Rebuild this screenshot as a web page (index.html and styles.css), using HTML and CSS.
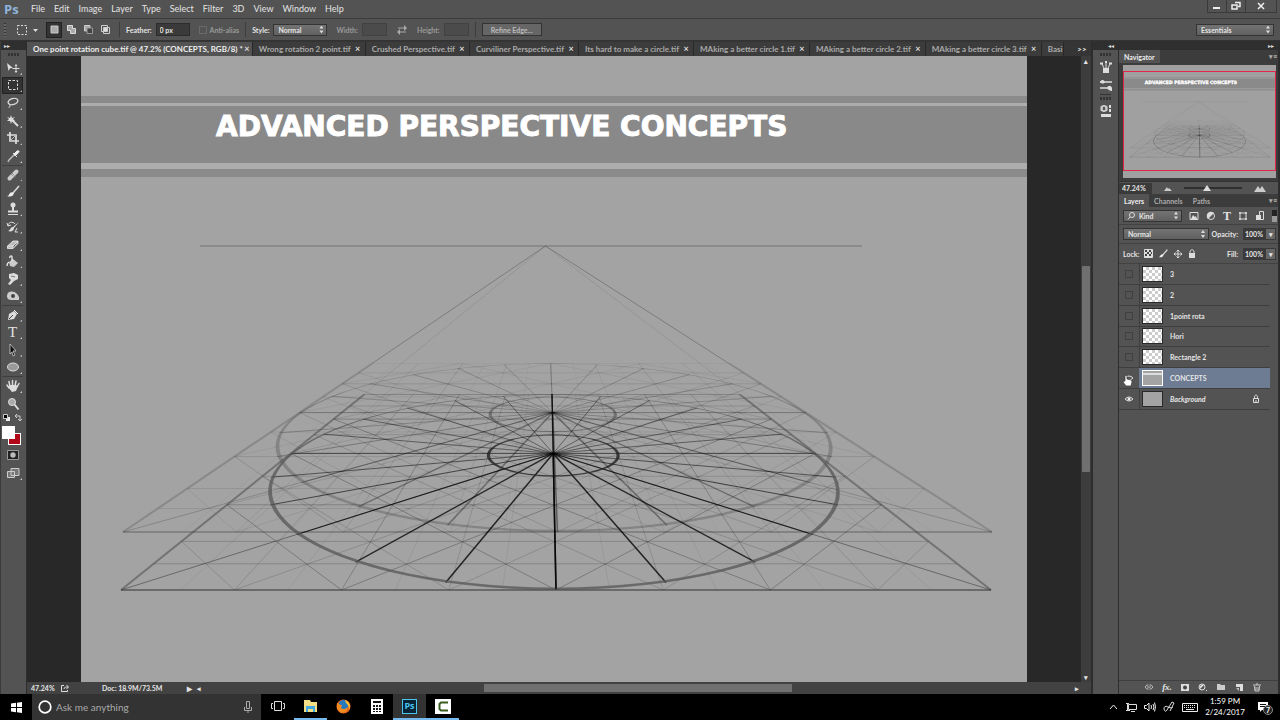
FILE: index.html
```html
<!DOCTYPE html>
<html lang="en">
<head>
<meta charset="utf-8">
<meta name="viewport" content="width=device-width, initial-scale=1">
<title>One point rotation cube.tif</title>
<link rel="stylesheet" href="styles.css">
</head>
<body>
<header class="menubar">
  <span class="logo">Ps</span>
  <nav class="menus">
    <button>File</button><button>Edit</button><button>Image</button><button>Layer</button><button>Type</button><button>Select</button><button>Filter</button><button>3D</button><button>View</button><button>Window</button><button>Help</button>
  </nav>
  <div class="window-buttons">
    <button aria-label="Minimize"><svg width="10" height="10" viewBox="0 0 10 10"><path d="M1 7h7" stroke="#eee" stroke-width="2"/></svg></button>
    <button aria-label="Restore"><svg width="10" height="10" viewBox="0 0 10 10"><path d="M4 1.500h5v4H7M1 4h5v4H1z" fill="none" stroke="#eee" stroke-width="1.500"/></svg></button>
    <button class="close" aria-label="Close"><svg width="10" height="10" viewBox="0 0 10 10"><path d="M2 2l6 6M8 2L2 8" stroke="#eee" stroke-width="1.500"/></svg></button>
  </div>
</header>

<section class="options">
  <span class="grip"></span>
  <button class="preset" aria-label="Marquee presets"><svg width="22" height="12" viewBox="0 0 22 12"><rect x="1.500" y="1.500" width="9" height="9" fill="none" stroke="#ddd" stroke-dasharray="2 1.500"/><path d="M17 5h5l-2.500 3z" fill="#ddd"/></svg></button>
  <div class="modes">
    <button class="on" aria-label="New selection"><svg width="11" height="11" viewBox="0 0 11 11"><path d="M2 2h7v7H2z" fill="#aaa" stroke="#ccc"/></svg></button>
    <button aria-label="Add to selection"><svg width="11" height="11" viewBox="0 0 11 11"><path d="M1.500 1.500h5v3h3v5h-5v-3h-3z" fill="#aaa" stroke="#ddd"/></svg></button>
    <button aria-label="Subtract from selection"><svg width="11" height="11" viewBox="0 0 11 11"><path d="M1.500 7V1.500H7V4H4v3z" fill="#aaa" stroke="#ccc"/><path d="M4 4h5.500v5.500H4z" fill="#444" stroke="#999"/></svg></button>
    <button aria-label="Intersect with selection"><svg width="11" height="11" viewBox="0 0 11 11"><path d="M1.500 1.500h6v6h-6zM3.500 3.500h6v6h-6z" fill="none" stroke="#ccc"/><path d="M4 4h3v3H4z" fill="#ddd"/></svg></button>
  </div>
  <span class="divider"></span>
  <label class="field">Feather: <input class="w-m" type="text" value="0 px"></label>
  <label class="field dim check"><input type="checkbox" disabled> Anti-alias</label>
  <span class="divider"></span>
  <label class="field">Style: <span class="select w-l"><select><option>Normal</option></select></span></label>
  <label class="field dim">Width: <input class="w-s" type="text" disabled></label>
  <button class="swap" aria-label="Swap height and width"><svg width="12" height="10" viewBox="0 0 12 10"><path d="M2 3h7M3 7h7" stroke="#aaa"/><path d="M8 0l3 3-3 3zM4 4L1 7l3 3z" fill="#aaa"/></svg></button>
  <label class="field dim">Height: <input class="w-s" type="text" disabled></label>
  <span class="divider"></span>
  <button class="refine">Refine Edge...</button>
  <span class="select essentials"><select aria-label="Workspace"><option>Essentials</option></select></span>
</section>

<main class="workspace">
  <aside class="toolbox">
    <div class="dock-head">▸▸</div>
    <div class="dots"></div>
    <div class="tools t6">
      <button aria-label="Move"><svg viewBox="0 0 16 14"><path d="M2 2l6 5-3 .3L3.500 10z" fill="#ddd"/><path d="M11 4v7M7.500 7.500h7M10 5l1-1.500L12 5M10 10l1 1.500L12 10" stroke="#ddd" fill="none"/></svg></button>
      <button class="on" aria-label="Rectangular marquee"><svg viewBox="0 0 16 14"><rect x="3.500" y="2.500" width="9" height="9" fill="none" stroke="#ddd" stroke-dasharray="2.500 1.500"/></svg></button>
      <button aria-label="Lasso"><svg viewBox="0 0 16 14"><ellipse cx="8" cy="5.500" rx="5" ry="3" transform="rotate(-15 8 5.500)" fill="none" stroke="#ddd" stroke-width="1.300"/><path d="M4 7c-1 2 2 1 1 3s-1 1-1 2" fill="none" stroke="#ddd"/></svg></button>
      <button aria-label="Magic wand"><svg viewBox="0 0 16 14"><path d="M7 6l6 6" stroke="#ddd" stroke-width="2"/><path d="M6 1l1 3 3-1-2 2 2 2-3 0-1 3-1-3-3 0 2-2-2-2 3 1z" fill="#ddd"/></svg></button>
      <button aria-label="Crop"><svg viewBox="0 0 16 14"><path d="M5 1v9h9M2 4h9v9" fill="none" stroke="#ddd" stroke-width="1.700"/><path d="M5 10l6-6" stroke="#bbb"/></svg></button>
      <button aria-label="Eyedropper"><svg viewBox="0 0 16 14"><path d="M9 5l3-3c2-1 3 1 1 2l-3 3zM8 4l4 4" fill="#eee" stroke="#eee"/><path d="M9 6l-5 5-1 2" fill="none" stroke="#bbb" stroke-width="1.500"/></svg></button>
    </div>
    <div class="tools t8">
      <button aria-label="Healing brush"><svg viewBox="0 0 16 14"><path d="M4.500 10.500l7-7" stroke="#ccc" stroke-width="4" stroke-linecap="round"/><path d="M6 6l4 4M7 5l4 4" stroke="#777" stroke-dasharray="1 1"/></svg></button>
      <button aria-label="Brush"><svg viewBox="0 0 16 14"><path d="M14 1L8 8" stroke="#ddd" stroke-width="1.500"/><path d="M9 8c-1 4-4 4-7 3 2 0 2-2 3-3s3-1 4 0z" fill="#eee"/></svg></button>
      <button aria-label="Clone stamp"><svg viewBox="0 0 16 14"><circle cx="8" cy="3" r="2.500" fill="#ddd"/><path d="M7 4h2v5H7z" fill="#ddd"/><path d="M3 8.500h10v2H3zM3 12h10v1H3z" fill="#ddd"/></svg></button>
      <button aria-label="History brush"><svg viewBox="0 0 16 14"><path d="M14 2l-5 6c0 3-3 4-6 3 3-1 2-4 5-4z" fill="#ddd"/><path d="M3 6c0-4 5-5 7-2M2 3l1 3 3-1M12 8l-2 4h3" fill="none" stroke="#ddd"/></svg></button>
      <button aria-label="Eraser"><svg viewBox="0 0 16 14"><path d="M2.500 9l5.500-5h5l-5 5zM2.500 9v2.500H8V9M8 11.500l5-5V4" fill="#bbb" stroke="#eee" stroke-width=".8"/></svg></button>
      <button aria-label="Paint bucket"><svg viewBox="0 0 16 14"><path d="M4 7l4-3 5 4-4 4-4-1z" fill="#ccc"/><path d="M7 6V2c0-2-3-1-2 1M4 7c-2 1-2 3-2 4" stroke="#eee" fill="none" stroke-width="1.300"/></svg></button>
      <button aria-label="Smudge"><svg viewBox="0 0 16 14"><path d="M4 2l5-1 4 2v4l-4 2-4 4-2-1 3-4-2-2z" fill="#ddd"/><path d="M6 4l4 1" stroke="#777"/></svg></button>
      <button aria-label="Sponge"><svg viewBox="0 0 16 14"><path d="M2 7c0-6 9-6 12 1v3H7c-3 0-5-1-5-4z" fill="#ccc"/><circle cx="8" cy="7" r="2" fill="#444"/></svg></button>
    </div>
    <div class="tools t4">
      <button aria-label="Pen"><svg viewBox="0 0 16 14"><path d="M3 12l1-6 5-3 3 3-3 5z" fill="#ddd"/><path d="M9 2l4 4" stroke="#eee"/><path d="M4 11l4-4" stroke="#444"/></svg></button>
      <button class="type" aria-label="Type">T</button>
      <button aria-label="Path selection"><svg viewBox="0 0 16 14"><path d="M5 1l6 7H8l2 4-2 1-1-4-2 2z" fill="#111" stroke="#ccc" stroke-width=".8"/></svg></button>
      <button aria-label="Ellipse"><svg viewBox="0 0 16 14"><ellipse cx="8" cy="7" rx="5.500" ry="4" fill="#999" stroke="#ddd"/></svg></button>
    </div>
    <div class="tools t2">
      <button aria-label="Hand"><svg viewBox="0 0 16 14"><path d="M4 9L2 6M5 8L4 2.500M7.500 7V1.500M10 7l1-5M12 8l2-3.500" stroke="#ddd" stroke-width="1.500" stroke-linecap="round"/><path d="M3 8l2-2h6l2 1-2 5-4 1z" fill="#ddd"/></svg></button>
      <button class="plain" aria-label="Zoom"><svg viewBox="0 0 16 14"><circle cx="7" cy="5" r="3.500" fill="#aaa" stroke="#ddd"/><path d="M9.500 7.500l4 5" stroke="#ddd" stroke-width="2"/></svg></button>
    </div>
    <div class="swatch-tools"><svg width="7" height="7" viewBox="0 0 7 7"><path d="M3 3h4v4H3z" fill="#eee"/><path d="M.5.5h4v4h-4z" stroke="#ccc"/></svg><svg width="8" height="7" viewBox="0 0 8 7"><path d="M1 2h5v5M3 0L1 2l2 2M4 5l2 2 2-2" fill="none" stroke="#ccc"/></svg></div>
    <div class="swatches"><button class="fg" aria-label="Foreground color"></button><button class="bg" aria-label="Background color"></button></div>
    <div class="tools t2">
      <button class="plain" aria-label="Quick mask"><svg viewBox="0 0 16 14"><path d="M2.500 2.500h11v9h-11z" fill="#222" stroke="#999"/><circle cx="8" cy="7" r="2.700" fill="#bbb"/></svg></button>
      <button aria-label="Screen mode"><svg viewBox="0 0 16 14"><path d="M6 2.500h8v7H6zM2.500 5.500h7v6h-7z" fill="#777" stroke="#ccc"/></svg></button>
    </div>
  </aside>

  <section class="editor">
    <div class="tabs">
      <div class="tab active"><button>One point rotation cube.tif @ 47.2% (CONCEPTS, RGB/8) *</button><button class="x" aria-label="Close tab">×</button></div>
      <div class="tab"><button>Wrong rotation 2 point.tif</button><button class="x" aria-label="Close tab">×</button></div>
      <div class="tab"><button>Crushed Perspective.tif</button><button class="x" aria-label="Close tab">×</button></div>
      <div class="tab"><button>Curviliner Perspective.tif</button><button class="x" aria-label="Close tab">×</button></div>
      <div class="tab"><button>Its hard to make a circle.tif</button><button class="x" aria-label="Close tab">×</button></div>
      <div class="tab"><button>MAking a better circle 1.tif</button><button class="x" aria-label="Close tab">×</button></div>
      <div class="tab"><button>MAking a better circle 2.tif</button><button class="x" aria-label="Close tab">×</button></div>
      <div class="tab"><button>MAking a better circle 3.tif</button><button class="x" aria-label="Close tab">×</button></div>
      <div class="tab cut"><button>Basi</button></div>
      <button class="more" aria-label="More tabs">&gt;&gt;</button>
    </div>
    <div class="stage">
      <div class="canvas">
        <article class="document">
          <div class="band"><h1>ADVANCED PERSPECTIVE CONCEPTS</h1></div>
          <svg class="drawing" viewBox="81 179 946 503" role="img" aria-label="Perspective construction">
            <g id="construction"></g>
          </svg>
        </article>
      </div>
      <div class="vscroll"><span>▴</span><i></i><span>▾</span></div>
    </div>
    <footer class="status">
      <span class="zoom">47.24%</span>
      <svg width="10" height="9" viewBox="0 0 10 9"><path d="M4 1.500H1.500v6h6V6M4 5c0-2 2-2 4-2M6.500 1l2 2-2 2" fill="none" stroke="#ddd"/></svg>
      <span class="docsize">Doc: 18.9M/73.5M</span>
      <span class="play">▸</span>
      <div class="hscroll"><span>◂</span><i></i><span>▸</span></div>
    </footer>
  </section>

  <aside class="icon-dock">
    <div class="dock-head right">◂◂</div>
    <div class="dots"></div>
    <button aria-label="Brush presets"><svg width="14" height="14" viewBox="0 0 14 14"><path d="M4 8h6v5H4z" fill="#ddd"/><path d="M5 8L3 4M7 8V3M9 8l2-4" stroke="#ddd"/><path d="M1 3.500h3M6 2h2M10 3.500h3" stroke="#ddd" stroke-width="2"/></svg></button>
    <button aria-label="Brushes"><svg width="14" height="14" viewBox="0 0 14 14"><path d="M1 4h12M1 10h8" stroke="#ddd" stroke-width="1.500"/><path d="M1 4c2-3 4-2 5 0-1 2-3 2-5 0zM8 10c1-3 4-3 5 0v3c-2 0-4-1-5-3z" fill="#ddd"/></svg></button>
    <div class="dots split"></div>
    <button aria-label="Properties"><svg width="14" height="14" viewBox="0 0 14 14"><path d="M2 2.500l3-1 3 1v4l-3 1-3-1z" fill="#bbb" stroke="#ddd"/><path d="M4 3h2v3H4z" fill="#555"/><path d="M10 1h2v3h-2zM10 5h2v3h-2zM2 10h10v3H2z" fill="#ddd"/></svg></button>
  </aside>

  <aside class="panels">
    <div class="dock-head right">▸▸</div>
    <div class="panel-tabs"><button class="active">Navigator</button><span class="panel-menu">▾≡</span></div>
    <div class="navigator">
      <svg class="preview" viewBox="81 19 946 700" preserveAspectRatio="none">
        <path d="M81 96h946v7H81zM81 106h946v57H81zM81 169h946v8H81z" fill="#8a8a8a"/>
        <text x="216" y="136">ADVANCED PERSPECTIVE CONCEPTS</text>
        <use href="#construction" opacity=".75"/>
      </svg>
      <span class="frame"></span>
    </div>
    <div class="nav-zoom">
      <input type="text" value="47.24%" aria-label="Zoom level">
      <svg width="8" height="6" viewBox="0 0 8 6"><path d="M0 6l3-4 1 2 1-1 3 3z" fill="#ccc"/></svg>
      <input type="range" min="0" max="100" value="38" aria-label="Zoom">
      <svg width="12" height="7" viewBox="0 0 12 7"><path d="M0 7l4-6 2 3 2-3 4 6z" fill="#ccc"/></svg>
    </div>
    <div class="panel-tabs"><button class="active">Layers</button><button>Channels</button><button>Paths</button><span class="panel-menu">▾≡</span></div>
    <div class="filter row">
      <span class="select kind"><svg width="8" height="8" viewBox="0 0 8 8"><circle cx="5" cy="3" r="2.500" fill="none" stroke="#ddd"/><path d="M3 5L1 7.500" stroke="#ddd"/></svg><select aria-label="Filter type"><option>Kind</option></select></span>
      <svg width="10" height="10" viewBox="0 0 10 10"><path d="M1 1.500h8v7H1z" fill="none" stroke="#ddd"/><path d="M2 8l2-4 2 2 1-1 1 3z" fill="#ddd"/></svg>
      <svg width="10" height="10" viewBox="0 0 10 10"><circle cx="5" cy="5" r="3.500" fill="#555" stroke="#ddd"/><path d="M2 8A4 4 0 0 1 8 2z" fill="#ddd"/></svg>
      <b class="serif">T</b>
      <svg width="10" height="10" viewBox="0 0 10 10"><path d="M2 2h6v6H2z" fill="none" stroke="#ddd"/><path d="M1 1h2v2H1zM7 1h2v2H7zM1 7h2v2H1zM7 7h2v2H7z" fill="#ccc"/></svg>
      <svg width="10" height="10" viewBox="0 0 10 10"><path d="M4.500.500h4v8h-4z" fill="#555" stroke="#ddd"/><path d="M1 4h5v5H1z" fill="#ddd"/></svg>
      <span class="switch"></span>
    </div>
    <div class="row mode">
      <span class="select blend"><select aria-label="Blend mode"><option>Normal</option></select></span>
      <label class="amount">Opacity: <input type="text" value="100%"></label><button class="drop">▾</button>
    </div>
    <div class="row lock">
      <span>Lock:</span>
      <svg width="9" height="9" viewBox="0 0 9 9"><path d="M.5.500h8v8h-8z" fill="#ddd" stroke="#ddd"/><path d="M1 1h2v2H1zM5 1h2v2H5zM3 3h2v2H3zM7 3h1v2H7zM1 5h2v2H1zM5 5h2v2H5z" fill="#444"/></svg>
      <svg width="10" height="10" viewBox="0 0 16 14"><path d="M15 0L8 8" stroke="#ddd" stroke-width="2"/><path d="M9 8c-1 4-4 5-8 4 2 0 2-3 4-4s3-1 4 0z" fill="#eee"/></svg>
      <svg width="10" height="10" viewBox="0 0 10 10"><path d="M5 1v8M1 5h8M3.500 2.500L5 1l1.500 1.500M3.500 7.500L5 9l1.500-1.500M2.500 3.500L1 5l1.500 1.500M7.500 3.500L9 5 7.500 6.500" fill="none" stroke="#ddd"/></svg>
      <svg width="8" height="10" viewBox="0 0 8 10"><path d="M1 4h6v5H1z" fill="#ddd"/><path d="M2 5V3c0-3 4-3 4 0v2" fill="none" stroke="#ddd"/></svg>
      <label class="amount">Fill: <input type="text" value="100%"></label><button class="drop">▾</button>
    </div>
    <ul class="layers">
      <li><button class="vis" aria-label="Show layer"></button><span class="thumb clear"></span><span>3</span></li>
      <li><button class="vis" aria-label="Show layer"></button><span class="thumb clear"></span><span>2</span></li>
      <li><button class="vis" aria-label="Show layer"></button><span class="thumb clear"></span><span>1point rota</span></li>
      <li><button class="vis" aria-label="Show layer"></button><span class="thumb clear"></span><span>Hori</span></li>
      <li><button class="vis" aria-label="Show layer"></button><span class="thumb clear"></span><span>Rectangle 2</span></li>
      <li class="selected"><button class="vis eye" aria-label="Hide layer"><svg width="10" height="8" viewBox="0 0 10 8"><path d="M1 4q4-4 8 0-4 4-8 0z" fill="#555" stroke="#ddd"/></svg></button><span class="thumb shot"></span><span>CONCEPTS</span>
        <svg class="cursor" width="11" height="13" viewBox="0 0 11 13"><path d="M3 7V2q1-2 2 0v3l4 1q1 0 1 2l-1 4H4L1 8q0-1 2-1z" fill="#fff" stroke="#333" stroke-width=".7"/></svg></li>
      <li><button class="vis eye" aria-label="Hide layer"><svg width="10" height="8" viewBox="0 0 10 8"><path d="M1 4q4-4 8 0-4 4-8 0z" fill="#555" stroke="#ddd"/><circle cx="5" cy="4" r="1.500" fill="#eee"/></svg></button><span class="thumb"></span><em>Background</em>
        <svg class="locked" width="8" height="10" viewBox="0 0 8 10"><path d="M1.500 4.500h5v4h-5zM2.500 4V3c0-2.500 3-2.500 3 0v1M4 6v2" fill="none" stroke="#ddd"/></svg></li>
    </ul>
    <div class="layer-actions">
      <button aria-label="Link layers"><svg width="10" height="8" viewBox="0 0 10 8"><path d="M4.500 2H3Q-.5 4 3 6h1.500M5.500 2H7q3.500 2 0 4H5.500M3 4h4" fill="none" stroke="#bbb"/></svg></button>
      <button class="fx">fx.</button>
      <button aria-label="Add mask"><svg width="10" height="8" viewBox="0 0 10 8"><path d="M1 1h8v7H1z" fill="#ddd"/><circle cx="5" cy="4.500" r="2" fill="#444"/></svg></button>
      <button aria-label="Adjustment layer"><svg width="10" height="8" viewBox="0 0 10 8"><circle cx="4" cy="4" r="3" fill="#555" stroke="#ddd"/><path d="M2 6A3 3 0 0 1 6 2zM8 7h1v1H8z" fill="#ddd"/></svg></button>
      <button aria-label="New group"><svg width="10" height="8" viewBox="0 0 10 8"><path d="M1 1h3l1 1h4v5H1z" fill="#ccc"/></svg></button>
      <button aria-label="New layer"><svg width="10" height="8" viewBox="0 0 10 8"><path d="M2 1h7v7H6V4H2z" fill="#ddd"/><path d="M2 5l3 3V5z" fill="#bbb"/></svg></button>
      <button aria-label="Delete layer"><svg width="10" height="9" viewBox="0 0 10 9"><path d="M1 2h8M4 1h2M2.500 3l.5 5h4l.5-5M4 4v3M6 4v3" fill="none" stroke="#ccc"/></svg></button>
    </div>
  </aside>
</main>

<footer class="taskbar">
  <button class="start" aria-label="Start"><svg width="11" height="11" viewBox="0 0 11 11"><path d="M0 1.500l5-.7V5H0zM6 .7L11 0v5H6zM0 6h5v4.200l-5-.7zM6 6h5v5l-5-.7z" fill="#fff"/></svg></button>
  <div class="search">
    <svg width="14" height="14" viewBox="0 0 14 14"><circle cx="7" cy="7" r="5.800" fill="none" stroke="#fff" stroke-width="1.700"/></svg>
    <input type="text" placeholder="Ask me anything" aria-label="Search">
    <svg width="8" height="12" viewBox="0 0 8 12"><path d="M2.500.5h3v7h-3zM.5 6v3.500h7V6M4 9.500V12" fill="none" stroke="#aaa"/></svg>
  </div>
  <div class="apps">
    <button aria-label="Task view"><svg width="14" height="12" viewBox="0 0 14 12"><path d="M3.500 1.500h7v9h-7zM2 3.500H.5v5H2M12 3.500h1.500v5H12" fill="none" stroke="#ddd"/></svg></button>
    <button class="running" aria-label="File Explorer"><svg width="15" height="14" viewBox="0 0 15 14"><path d="M1 1h6l1 2h6v10H1z" fill="#f5df84"/><path d="M3 7h9v6h-2v-3H5v3H3z" fill="#42a9df"/></svg></button>
    <button aria-label="Firefox"><svg width="15" height="15" viewBox="0 0 15 15"><circle cx="7.500" cy="7.500" r="7" fill="#e8651b"/><circle cx="7.500" cy="6" r="5" fill="#2679bd"/><path d="M1 4c2 0 2 2 5 2l-1 3c2 2 5 1 7-1l-2 5-5 1-4-4z" fill="#f18b20"/><path d="M9 1c5 2 6 6 4 10 0-4-1-5-3-7z" fill="#f9bd35"/></svg></button>
    <button aria-label="Calculator"><svg width="12" height="15" viewBox="0 0 12 15"><path d="M0 0h12v15H0z" fill="#fff"/><path d="M2 2h8v2H2zM2 6h2v2H2zM5 6h2v2H5zM8 6h2v2H8zM2 9h2v2H2zM5 9h2v2H5zM8 9h2v2H8zM2 12h2v1H2zM5 12h2v1H5zM8 12h2v1H8z" fill="#111"/></svg></button>
    <button class="running current" aria-label="Photoshop"><span class="ps">Ps</span></button>
    <button class="running" aria-label="Camtasia"><svg width="16" height="15" viewBox="0 0 16 15"><path d="M0 0h16v15H0z" fill="#fff"/><path d="M12 4.500V3.500H6L4.500 5v5L6 11.500h6v-1" fill="none" stroke="#385c1e" stroke-width="2"/></svg></button>
  </div>
  <div class="tray">
    <svg width="9" height="6" viewBox="0 0 9 6"><path d="M1 5l3.500-4L8 5" fill="none" stroke="#eee"/></svg>
    <svg width="12" height="10" viewBox="0 0 12 10"><path d="M3.500 2.500h8v5h-8zM1 1.500h3M2.500 1v7M1 8.500h4M6 9.500h4" fill="none" stroke="#ddd"/></svg>
    <svg width="12" height="10" viewBox="0 0 12 10"><path d="M.5 3.500h2L5 1v8L2.500 6.500h-2zM7 3q1 2 0 4M9 2q2 3 0 6M10.500.5q2 4 0 9" fill="none" stroke="#eee"/></svg>
    <svg width="12" height="12" viewBox="0 0 12 12"><path d="M4 9L9 1l2 1-4 8M1 8q0-4 4-2t5 0M1 8q1 4 3 1" fill="none" stroke="#ddd"/></svg>
    <svg width="16" height="9" viewBox="0 0 16 9"><path d="M.5.500h15v8H.5z" fill="none" stroke="#eee"/><path d="M2 2.500h12M2 4.500h12" stroke="#eee" stroke-dasharray="1 1"/><path d="M4 6.500h8" stroke="#eee"/></svg>
    <time>1:59 PM<br>2/24/2017</time>
    <span class="notes"><svg width="12" height="12" viewBox="0 0 12 12"><path d="M1 1h10v8H5l-2 2V9H1z" fill="#fff"/><path d="M3 3.500h6M3 5.500h6" stroke="#111"/></svg><b>7</b></span>
  </div>
</footer>
<script src="drawing.js"></script>
</body>
</html>
```

FILE: styles.css
```css
* { box-sizing: border-box; }
body {
  margin: 0; height: 100vh; display: flex; flex-direction: column; overflow: hidden;
  background: #535353; color: #e4e4e4; font: 700 7px/10px Lato, "Open Sans", sans-serif;
}
button, input, select { font: inherit; color: inherit; background: none; border: 0; padding: 0; margin: 0; }
button { display: flex; align-items: center; justify-content: center; }
svg { flex: none; display: block; }

.menubar { flex: none; height: 19px; display: flex; align-items: center; border-bottom: 1px solid #3c3c3c; padding-left: 4px; }
.logo { font: bold 13px/16px "Open Sans", sans-serif; color: #8fb4dc; width: 21px; }
.menus { display: flex; gap: 9px; padding-left: 6px; font-size: 9px; font-weight: 400; }
.window-buttons { margin-left: auto; align-self: flex-start; display: flex; height: 13px; margin-right: 3px; border: 1px solid #3a3a3a; border-top: 0; }
.window-buttons button { width: 19px; border-right: 1px solid #3a3a3a; }
.window-buttons .close { width: 30px; border: 0; }

.options { flex: none; height: 22px; display: flex; align-items: center; padding: 0 6px 0 4px; border-bottom: 1px solid #333; }
.grip { width: 2px; height: 14px; background: repeating-linear-gradient(#333 0 1px, #666 1px 3px); }
.preset { margin-left: 10px; }
.modes { display: flex; margin-left: 8px; gap: 1px; }
.modes button { width: 16px; height: 16px; }
.modes .on { background: #333; border: 1px solid #222; }
.divider { width: 1px; height: 15px; background: #3d3d3d; margin: 0 6px; }
.field { display: flex; align-items: center; gap: 4px; }
.field.dim { color: #999; margin-left: 9px; }
.field input[type="text"] { height: 13px; background: #3a3a3a; border: 1px solid #2c2c2c; padding: 0 3px; }
.field.dim input[type="text"] { background: #4b4b4b; border-color: #424242; }
.w-m { width: 34px; }
.w-s { width: 25px; }
.w-l { width: 54px; }
.check { gap: 3px; }
.check input { appearance: none; width: 8px; height: 8px; border: 1px solid #6a6a6a; }
.swap { width: 30px; }
.swap + .field { margin-left: 0; }
.refine { height: 13px; width: 60px; border: 1px solid #333; background: #666; color: #bbb; }
.essentials { width: 78px; margin-left: auto; }
.select { position: relative; display: flex; align-items: center; height: 12px; background: linear-gradient(#737373, #606060); border: 1px solid #343434; }
.select select { appearance: none; width: 100%; padding: 0 4px; line-height: 10px; }
.select::after {
  content: ""; position: absolute; right: 3px; top: 1px; width: 4px; height: 8px; background: #ddd;
  clip-path: polygon(50% 0, 100% 38%, 0 38%, 0 62%, 100% 62%, 50% 100%, 0 62%, 0 38%);
}

.workspace { flex: 1; min-height: 0; display: flex; background: #2d2d2d; }
.dock-head { flex: none; height: 9px; background: #2f2f2f; font: 6px/9px "DejaVu Sans", sans-serif; color: #ddd; padding-left: 3px; }
.dock-head.right { text-align: right; padding-right: 4px; }
.dots { height: 8px; flex: none; margin: 0 7px; background: repeating-linear-gradient(90deg, #333 0 2px, transparent 2px 3px) center / 100% 3px no-repeat; }

.toolbox { width: 26px; margin-right: 1px; flex: none; background: #535353; border-left: 1px solid #3b3b3b; }
.tools { display: grid; grid-auto-rows: 1fr; margin: 0 3px 0 1px; border-bottom: 1px solid #3f3f3f; }
.tools.t6 { height: 107px; margin-top: 1px; }
.tools.t8 { height: 140px; }
.tools.t4 { height: 71px; }
.tools.t2 { height: 36px; border: 0; }
.tools button { position: relative; width: 21px; border-radius: 1px; }
.tools svg { width: 16px; height: 14px; }
.tools button::after { content: ""; position: absolute; right: 1px; bottom: 2px; width: 2px; height: 2px; background: #ccc; clip-path: polygon(100% 0, 100% 100%, 0 100%); }
.tools .plain::after { display: none; }
.tools .on { background: #333; box-shadow: inset 0 0 0 1px #222; }
.tools .type { font: 15px/16px "Liberation Serif", serif; }
.swatch-tools { display: flex; justify-content: space-between; padding: 1px 4px 5px 2px; }
.swatches { display: grid; grid-template-columns: 6px 7px 6px; grid-template-rows: 7px 6px 6px; padding-left: 1px; height: 20px; }
.swatches button { border: 1px solid #fff; }
.fg { grid-area: 1 / 1 / 3 / 3; background: #fff; z-index: 1; }
.swatches .bg { grid-area: 2 / 2 / 4 / 4; background: #b00818; }

.editor { flex: 1; min-width: 0; display: flex; flex-direction: column; }
.tabs { flex: none; height: 15px; display: flex; overflow: hidden; background: #353535; padding-top: 1px; color: #aaa; font-size: 8px; }
.tab { display: flex; flex: none; align-items: center; gap: 4px; padding: 0 4px 0 6px; background: #3c3c3c; border-right: 1px solid #282828; white-space: nowrap; }
.tab.active { background: #535353; color: #eee; gap: 1px; padding-right: 2px; }
.tab .x { font-size: 9px; width: 6px; color: #ddd; }
.tab.cut { padding-right: 1px; }
.more { margin-left: auto; flex: none; width: 18px; color: #eee; }
.stage { flex: 1; min-height: 0; display: flex; background: #282828; }
.canvas { flex: 1; min-width: 0; overflow: hidden; padding: 0 53px 0 54px; }
.document { min-height: 100%; background: #a3a3a3; padding-top: 40px; }
.band { border-top: 7px solid #8b8b8b; border-bottom: 8px solid #8b8b8b; padding: 3px 0 6px; background: #adadad; margin-bottom: 2px; }
.band h1 { margin: 0; padding: 0 0 0 135px; height: 57px; background: #898989; color: #fff; font: 700 28px/42px "DejaVu Sans", sans-serif; white-space: nowrap; -webkit-text-stroke: 1px #fff; }
.drawing { width: 100%; height: auto; }
.vscroll { width: 11px; flex: none; display: flex; flex-direction: column; align-items: center; background: #3d3d3d; border-left: 1px solid #2a2a2a; }
.vscroll i { width: 8px; flex: none; height: 33%; margin: auto 0; background: #707070; border-radius: 1px; }
.status { flex: none; height: 12px; display: flex; align-items: center; background: #424242; padding-left: 4px; }
.zoom { width: 29px; }
.docsize { padding-left: 32px; width: 117px; }
.play { width: 10px; font-size: 10px; }
.hscroll { flex: 1; display: flex; align-items: center; justify-content: space-between; margin-right: 12px; }
.hscroll i { width: 35%; height: 8px; background: #707070; }

.icon-dock { width: 26px; margin-left: 2px; flex: none; background: #535353; border-right: 1px solid #2d2d2d; }
.icon-dock button { width: 100%; height: 18px; }
.icon-dock .split { border-top: 1px solid #333; }

.panels { width: 159px; flex: none; margin-right: 2px; background: #535353; display: flex; flex-direction: column; }
.panel-tabs { flex: none; height: 13px; display: flex; background: #3c3c3c; color: #aaa; }
.panel-tabs button { padding: 0 5px; }
.panel-tabs .active { background: #535353; color: #eee; }
.panel-menu { margin-left: auto; padding-right: 1px; line-height: 13px; }
.navigator { position: relative; padding: 2px 2px 3px 4px; background: #3c3c3c; }
.preview { width: 100%; height: 113px; background: #a0a0a0; }
.preview text { font: 700 28px "DejaVu Sans", sans-serif; fill: #fff; stroke: #fff; stroke-width: 2px; }
.frame { position: absolute; left: 4px; right: 2px; top: 8px; bottom: 10px; border: 1px solid #e22648; }
.nav-zoom { display: flex; align-items: center; height: 13px; gap: 12px; border-top: 1px solid #333; padding-right: 12px; }
.nav-zoom input[type="text"] { width: 33px; padding-left: 3px; height: 11px; background: #3a3a3a; }
.nav-zoom input[type="range"] { flex: 1; min-width: 0; appearance: none; height: 2px; background: #2f2f2f; }
.nav-zoom input[type="range"]::-webkit-slider-thumb { appearance: none; width: 8px; height: 6px; background: #ddd; clip-path: polygon(50% 0, 100% 100%, 0 100%); }
.row { flex: none; display: flex; align-items: center; height: 18px; padding: 0 2px 0 4px; border-bottom: 1px solid #424242; }
.filter { justify-content: space-between; padding-right: 1px; }
.kind { width: 59px; padding-left: 3px; }
.serif { font: bold 12px/12px "Liberation Serif", serif; }
.switch { width: 5px; height: 12px; background: linear-gradient(#222 50%, #999 50%); }
.mode { height: 19px; }
.blend { width: 86px; }
.amount { margin-left: auto; display: flex; align-items: center; gap: 5px; }
.amount input { width: 22px; height: 12px; background: #3a3a3a; padding-left: 2px; }
.drop { width: 11px; height: 12px; background: #666; border: 1px solid #3a3a3a; }
.lock > svg { margin-left: 5px; }
.lock { height: 20px; }
.layers { list-style: none; margin: 0; padding: 0 8px 0 0; height: 146px; display: grid; grid-auto-rows: 1fr; }
.layers li { position: relative; display: flex; align-items: center; border-bottom: 1px solid #3f3f3f; background: linear-gradient(90deg, transparent 20px, #3f3f3f 20px 21px, transparent 21px); }
.vis { width: 8px; height: 8px; margin: 0 9px 0 6px; border: 1px solid #404040; }
.vis.eye { border: 0; }
.thumb { width: 21px; height: 16px; margin-right: 7px; background: #a3a3a3; border: 1px solid #2a2a2a; }
.thumb.clear { background: repeating-conic-gradient(#ccc 0 25%, #fff 0 50%) 0 0 / 6px 6px; }
.thumb.shot { border-color: #fff; background: linear-gradient(#a3a3a3 2px, #ddd 2px 4px, #a3a3a3 4px); }
.layers .selected { background: linear-gradient(90deg, #535353 20px, #6d7b93 20px); }
.cursor { position: absolute; left: 3px; top: 6px; }
.locked { margin-left: auto; margin-right: 10px; }
.layer-actions { margin-top: auto; height: 14px; display: flex; justify-content: flex-end; gap: 8px; padding: 0 16px 1px 0; border-top: 1px solid #3f3f3f; }
.layer-actions button { width: 10px; }
.layer-actions .fx { font: italic bold 9px/10px "Liberation Serif", serif; }

.taskbar { flex: none; height: 26px; display: flex; background: #000; color: #fff; font-weight: 400; }
.start { width: 32px; }
.search { width: 229px; display: flex; align-items: center; background: #333; padding: 0 9px 0 6px; gap: 4px; }
.search input { flex: 1; min-width: 0; font-size: 10px; line-height: 16px; }
.search input::placeholder { color: #aaa; opacity: 1; }
.apps { display: flex; }
.apps button { width: 33px; border-bottom: 2px solid transparent; }
.apps .running { border-color: #76b9ed; background-clip: padding-box; }
.apps .current { background: #333; }
.ps { width: 15px; height: 15px; border: 1px solid #4bc5ed; background: #072537; color: #4bc5ed; font: bold 9px/12px "Open Sans", sans-serif; }
.tray { margin-left: auto; display: flex; align-items: center; gap: 7px; padding-right: 11px; }
.tray time { text-align: center; font-size: 8px; line-height: 11px; width: 40px; }
.notes { position: relative; margin-left: 5px; }
.notes b { position: absolute; left: 6px; top: 4px; width: 10px; height: 10px; border-radius: 50%; border: 1px solid #888; background: #222; font-size: 7px; line-height: 8px; text-align: center; }
```

FILE: drawing.js
```js
const group = document.getElementById('construction');

function add(tag, attrs) {
  const node = document.createElementNS('http://www.w3.org/2000/svg', tag);
  for (const key in attrs) node.setAttribute(key, attrs[key]);
  group.appendChild(node);
}

function line(a, b, stroke, width, opacity) {
  add('path', { d: `M${a}L${b}`, stroke, 'stroke-width': width, 'stroke-opacity': opacity, fill: 'none' });
}

// A unit square lying on the ground, seen in one point perspective.
function plane(p) {
  const near = 1 / (p.base - p.horizon);
  const far = 1 / (p.top - p.horizon);
  const at = (u, t) => {
    const depth = 1 / (near + t * (far - near));
    const k = depth * near;
    const x = p.vx + (p.left + u * (p.right - p.left) - p.vx) * k;
    return [x.toFixed(1), (p.horizon + depth).toFixed(1)];
  };
  const o = p.strength;
  const inset = s => 0.5 + (s - 0.5) * 0.986;

  for (let i = 1; i < 16; i++) {
    const s = i / 16;
    const a = i % 4 === 0 ? 0.3 : i % 2 === 0 ? 0.18 : 0.08;
    line(at(inset(s), 0), at(inset(s), 1), '#222', 1, a * o);
    if (i % 2 === 0 || i === 1) line(at(0, s), at(1, s), '#222', 1, (i <= 2 ? 0.25 : a) * o);
  }
  for (let i = 1; i < 8; i++) {
    const s = i / 8;
    const a = (i % 2 === 0 ? 0.34 : 0.2) * o;
    line(at(inset(s), 0), at(0, s), '#222', 1, a);
    line(at(inset(s), 0), at(1, 1 - s), '#222', 1, a);
    if (i % 2 === 0) {
      line(at(0, s), at(1 - s, 1), '#222', 1, a * 0.4);
      line(at(1, s), at(s, 1), '#222', 1, a * 0.4);
    }
  }
  line(at(0, 0), at(0.5, 0.5), '#222', 1, 0.5 * o);
  line(at(1, 0), at(0.5, 0.5), '#222', 1, 0.5 * o);
  line(at(0, 0), at(1, 0), '#444', 2, 0.6 * p.edge);
  line(at(0, 1), at(1, 1), '#444', 1, p.farEdge);
  line(at(0, 0), at(0, 1), '#444', 2, 0.5 * p.edge);
  line(at(1, 0), at(1, 1), '#444', 2, 0.5 * p.edge);

  for (let i = 0; i < 24; i++) {
    const angle = i * Math.PI / 12;
    const down = Math.max(0, -Math.sin(angle));
    const up = Math.max(0, Math.sin(angle));
    const end = at(0.5 + Math.cos(angle) / 2, 0.5 + Math.sin(angle) / 2);
    line(at(0.5, 0.5), end, '#000', 0.8 + down ** 3 * 0.8, (0.62 + down * 0.26 - up * 0.04) * p.ink);
  }

  // Both rings are flat bands on the ground, so they narrow with distance.
  const ring = (radius, thick, stroke, opacity) => {
    const outline = r => {
      const points = [];
      for (let i = 0; i <= 120; i++) {
        const angle = i * Math.PI / 60;
        points.push(at(0.5 + Math.cos(angle) * r, 0.5 + Math.sin(angle) * r));
      }
      return `M${points.join('L')}Z`;
    };
    add('path', { d: outline(radius) + outline(radius - thick), fill: stroke, 'fill-rule': 'evenodd', opacity });
  };
  ring(0.5, 0.0055, p.ringColor, p.ringOpacity);
  ring(0.126, 0.006, p.hubColor, p.hubOpacity);
}

line([200, 246], [862, 246], '#444', 1, 0.5);
line([545.5, 246], [364, 394], '#444', 1, 0.14);
line([545.5, 246], [740, 394], '#444', 1, 0.14);
line([545.5, 246], [372, 363.5], '#444', 1, 0.4);
line([545.5, 246], [729, 363.5], '#444', 1, 0.4);
plane({ left: 123, right: 992, base: 532, top: 363.5, horizon: 246, vx: 546, strength: 0.45, edge: 0.55, farEdge: 0.05, ink: 0.4, ringColor: '#555', hubColor: '#444', ringOpacity: 0.4, hubOpacity: 0.5 });
plane({ left: 121, right: 991, base: 590, top: 394.5, horizon: 246, vx: 549, strength: 0.9, edge: 1, farEdge: 0.35, ink: 0.9, ringColor: '#555', hubColor: '#222', ringOpacity: 0.75, hubOpacity: 0.8 });
line([552, 394], [556, 589], '#000', 1.5, 0.7);
```
